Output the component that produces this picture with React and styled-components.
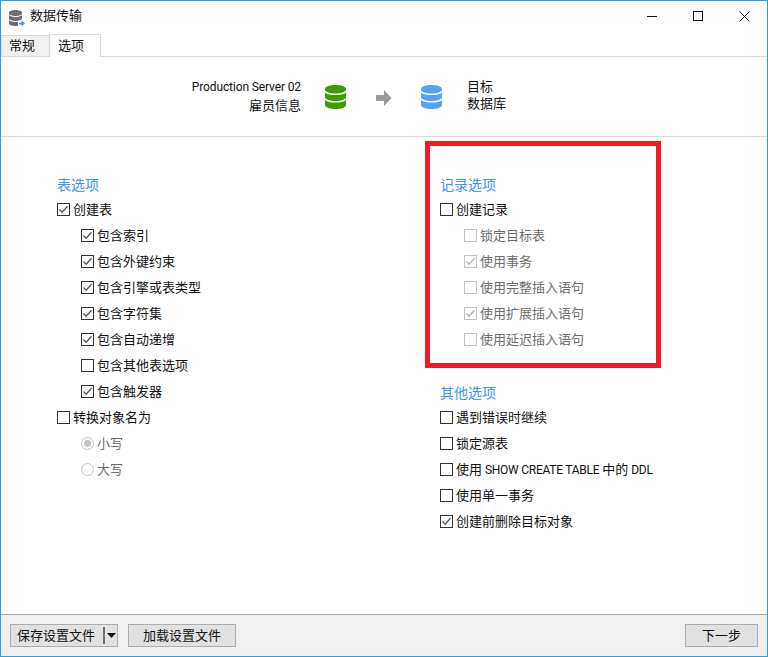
import styled, { createGlobalStyle } from 'styled-components'

const GlobalStyle = createGlobalStyle`
    html, body {
        margin: 0;
        padding: 0;
        background: #fff;
    }
    * {
        box-sizing: border-box;
    }
`

const FONT = `"Noto Sans CJK SC", "Noto Sans", sans-serif`

const Window = styled.div`
    position: relative;
    width: 768px;
    height: 657px;
    display: flex;
    flex-direction: column;
    border: 1px solid #1ba5e8;
    background: #fff;
    font-family: ${FONT};
    font-size: 13px;
    color: #111;
    overflow: hidden;
`

const TitleBar = styled.div`
    height: 33px;
    display: flex;
    align-items: center;
    padding-left: 8px;
    gap: 5px;
    flex: none;
`

const TitleText = styled.div`
    flex: 1;
    line-height: 28px;
    padding-bottom: 5px;
`

const WinButtons = styled.div`
    display: flex;
    align-items: center;
    height: 30px;
    margin-bottom: 3px;
`

const WinButton = styled.div`
    width: 46px;
    height: 30px;
    display: flex;
    align-items: center;
    justify-content: center;
`

const TabBar = styled.div`
    height: 23px;
    display: flex;
    align-items: flex-end;
    border-bottom: 1px solid #d9d9d9;
    flex: none;
`

const Tab = styled.div`
    height: ${(p) => (p.$active ? '23px' : '21px')};
    width: ${(p) => (p.$active ? '52px' : '48px')};
    padding-left: ${(p) => (p.$active ? '8px' : '7px')};
    line-height: ${(p) => (p.$active ? '19px' : '17px')};
    background: ${(p) => (p.$active ? '#fff' : '#f0f0f0')};
    border: 1px solid #d9d9d9;
    border-width: ${(p) => (p.$active ? '1px 1px 0 1px' : '1px 0 0 1px')};
    margin-bottom: ${(p) => (p.$active ? '-1px' : '0')};
`

const Header = styled.div`
    height: 80px;
    flex: none;
    display: flex;
    align-items: flex-start;
    border-bottom: 1px solid #d9d9d9;
    padding-top: 20px;
`

const SourceInfo = styled.div`
    width: 300px;
    text-align: right;
    line-height: 17px;
`

const DbSlot = styled.div`
    margin-left: ${(p) => p.$gap}px;
    margin-top: 8px;
    display: flex;
`

const TargetInfo = styled.div`
    margin-left: 25px;
    line-height: 17px;
`

const Latin = styled.span`
    font-family: Roboto, sans-serif;
    font-size: 12px;
    letter-spacing: ${(p) => p.$spacing || -0.12}px;
`

const Body = styled.div`
    flex: 1;
    display: flex;
    padding: 36px 0 0 56px;
`

const Column = styled.div`
    width: ${(p) => p.$width}px;
    flex: none;
`

const SectionTitle = styled.div`
    height: 23px;
    line-height: 23px;
    font-size: 14px;
    color: #3a96f0;
`

const Group = styled.div`
    margin-bottom: 29px;
`

const Row = styled.div`
    height: 26px;
    display: flex;
    align-items: center;
    gap: 2px;
    padding-left: ${(p) => (p.$indent ? '24px' : '0')};
    color: ${(p) => (p.$disabled ? '#6d6d6d' : '#111')};
    white-space: pre;
`

const Label = styled.span`
    padding-bottom: 2px;
`

const Box = styled.span`
    width: 13px;
    height: 13px;
    flex: none;
    border: 1px solid ${(p) => (p.$disabled ? '#c4c4c4' : '#333')};
    background: #fff;
    display: flex;
    align-items: center;
    justify-content: center;
    margin-right: 1px;
`

const Radio = styled.span`
    width: 13px;
    height: 13px;
    flex: none;
    border: 1px solid #c4c4c4;
    border-radius: 50%;
    display: flex;
    align-items: center;
    justify-content: center;
    margin-right: 1px;
    &::after {
        content: '';
        display: ${(p) => (p.$on ? 'block' : 'none')};
        width: 7px;
        height: 7px;
        border-radius: 50%;
        background: #c4c4c4;
    }
`

const Highlight = styled.div`
    position: absolute;
    left: 424px;
    top: 140px;
    width: 236px;
    height: 227px;
    border: 5px solid #ed1c24;
    pointer-events: none;
`

const Footer = styled.div`
    height: 42px;
    flex: none;
    display: flex;
    align-items: flex-start;
    background: #f0f0f0;
    border-top: 1px solid #a8a8a8;
    padding: 9px 9px 0 9px;
`

const Button = styled.div`
    height: 23px;
    width: ${(p) => p.$width}px;
    background: #e1e1e1;
    border: 1px solid #adadad;
    display: flex;
    align-items: center;
    justify-content: center;
    line-height: 19px;
    padding-bottom: 2px;
    margin-left: ${(p) => p.$left || 0}px;
`

const SplitLabel = styled.span`
    flex: 1;
    text-align: center;
    padding-right: 2px;
`

const SplitBar = styled.span`
    width: 2px;
    height: 17px;
    margin-top: 2px;
    background: #707070;
`

const SplitArrow = styled.span`
    width: 12px;
    display: flex;
    justify-content: center;
    margin-top: 2px;
`

const Spacer = styled.div`
    flex: 1;
`

function Check({ color }) {
    return (
        <svg width="11" height="11" viewBox="0 0 11 11">
            <path d="M1.5 5.5 L4.2 8.2 L9.5 2.2" fill="none" stroke={color} strokeWidth="1.3" />
        </svg>
    )
}

function Option({ label, checked, indent, disabled }) {
    return (
        <Row $indent={indent} $disabled={disabled}>
            <Box $disabled={disabled}>
                {checked && <Check color={disabled ? '#b4b4b4' : '#555'} />}
            </Box>
            <Label>{label}</Label>
        </Row>
    )
}

function RadioOption({ label, on }) {
    return (
        <Row $indent $disabled>
            <Radio $on={on} />
            <Label>{label}</Label>
        </Row>
    )
}

function Database({ color }) {
    return (
        <svg width="21" height="24" viewBox="0 0 21 24">
            <path d="M0 4C0 1.500 5 0 10.500 0S21 1.500 21 4v.5C21 7 16 8.500 10.500 8.500S0 7 0 4.500z" fill={color} />
            <path d="M0 7.500C2 9.500 6 10 10.500 10S19 9.500 21 7.500V12c0 2.500-5 4-10.500 4S0 14.500 0 12z" fill={color} />
            <path d="M0 15C2 17 6 17.500 10.500 17.500S19 17 21 15v5c0 2.500-5 4-10.500 4S0 22.500 0 20z" fill={color} />
        </svg>
    )
}

function TitleIcon() {
    return (
        <svg width="16" height="16" viewBox="0 0 16 16">
            <path d="M0 2.500C0 1 3 0 6.500 0S13 1 13 2.500v1C13 5 10 6 6.500 6S0 5 0 3.500z" fill="#6e6e6e" />
            <path d="M0 5C1.500 6.500 4 7 6.500 7S11.500 6.500 13 5v3.500C13 10 10 11 6.500 11S0 10 0 8.500z" fill="#6e6e6e" />
            <path d="M0 10C1.500 11.500 4 12 6.500 12c.8 0 1.500 0 2.500-.2V15.800c-1 .2-1.700.2-2.500.2C3 16 0 15 0 13.500z" fill="#6e6e6e" />
            <path d="M10 12.500h2.500V10.500L16 13.500 12.500 16.500v-2H10z" fill="#3a96f0" />
        </svg>
    )
}

function App() {
    return (
        <Window>
            <GlobalStyle />
            <TitleBar>
                <TitleIcon />
                <TitleText>数据传输</TitleText>
                <WinButtons>
                    <WinButton>
                        <svg width="10" height="10" viewBox="0 0 10 10">
                            <path d="M0 5.500H10" stroke="#111" strokeWidth="1" />
                        </svg>
                    </WinButton>
                    <WinButton>
                        <svg width="10" height="10" viewBox="0 0 10 10">
                            <rect x=".5" y=".5" width="9" height="9" fill="none" stroke="#111" strokeWidth="1" />
                        </svg>
                    </WinButton>
                    <WinButton>
                        <svg width="11" height="11" viewBox="0 0 11 11">
                            <path d="M.5 .5L10.500 10.500M10.500 .5L.5 10.500" stroke="#111" strokeWidth="1" />
                        </svg>
                    </WinButton>
                </WinButtons>
            </TitleBar>

            <TabBar>
                <Tab>常规</Tab>
                <Tab $active>选项</Tab>
            </TabBar>

            <Header>
                <SourceInfo>
                    <div><Latin>Production Server 02</Latin></div>
                    <div>雇员信息</div>
                </SourceInfo>
                <DbSlot $gap={24}>
                    <Database color="#3f9c00" />
                </DbSlot>
                <DbSlot $gap={30}>
                    <svg width="16" height="16" viewBox="0 0 16 16" style={{ marginTop: 5 }}>
                        <path d="M0 5H8V0L15.500 8 8 16V11H0z" fill="#999" />
                    </svg>
                </DbSlot>
                <DbSlot $gap={29}>
                    <Database color="#55a2f5" />
                </DbSlot>
                <TargetInfo>
                    <div>目标</div>
                    <div>数据库</div>
                </TargetInfo>
            </Header>

            <Body>
                <Column $width={383}>
                    <SectionTitle>表选项</SectionTitle>
                    <Option label="创建表" checked />
                    <Option label="包含索引" checked indent />
                    <Option label="包含外键约束" checked indent />
                    <Option label="包含引擎或表类型" checked indent />
                    <Option label="包含字符集" checked indent />
                    <Option label="包含自动递增" checked indent />
                    <Option label="包含其他表选项" indent />
                    <Option label="包含触发器" checked indent />
                    <Option label="转换对象名为" />
                    <RadioOption label="小写" on />
                    <RadioOption label="大写" />
                </Column>
                <Column $width={300}>
                    <Group>
                        <SectionTitle>记录选项</SectionTitle>
                        <Option label="创建记录" />
                        <Option label="锁定目标表" indent disabled />
                        <Option label="使用事务" checked indent disabled />
                        <Option label="使用完整插入语句" indent disabled />
                        <Option label="使用扩展插入语句" checked indent disabled />
                        <Option label="使用延迟插入语句" indent disabled />
                    </Group>
                    <SectionTitle>其他选项</SectionTitle>
                    <Option label="遇到错误时继续" />
                    <Option label="锁定源表" />
                    <Option label={<>使用 <Latin $spacing={-0.25}>SHOW CREATE TABLE</Latin> 中的 <Latin $spacing={-0.25}>DDL</Latin></>} />
                    <Option label="使用单一事务" />
                    <Option label="创建前删除目标对象" checked />
                </Column>
            </Body>

            <Footer>
                <Button $width={108}>
                    <SplitLabel>保存设置文件</SplitLabel>
                    <SplitBar />
                    <SplitArrow>
                        <svg width="9" height="5" viewBox="0 0 9 5">
                            <path d="M0 0H9L4.500 5z" fill="#111" />
                        </svg>
                    </SplitArrow>
                </Button>
                <Button $width={108} $left={10}>加载设置文件</Button>
                <Spacer />
                <Button $width={73}>下一步</Button>
            </Footer>

            <Highlight />
        </Window>
    )
}

export default App
